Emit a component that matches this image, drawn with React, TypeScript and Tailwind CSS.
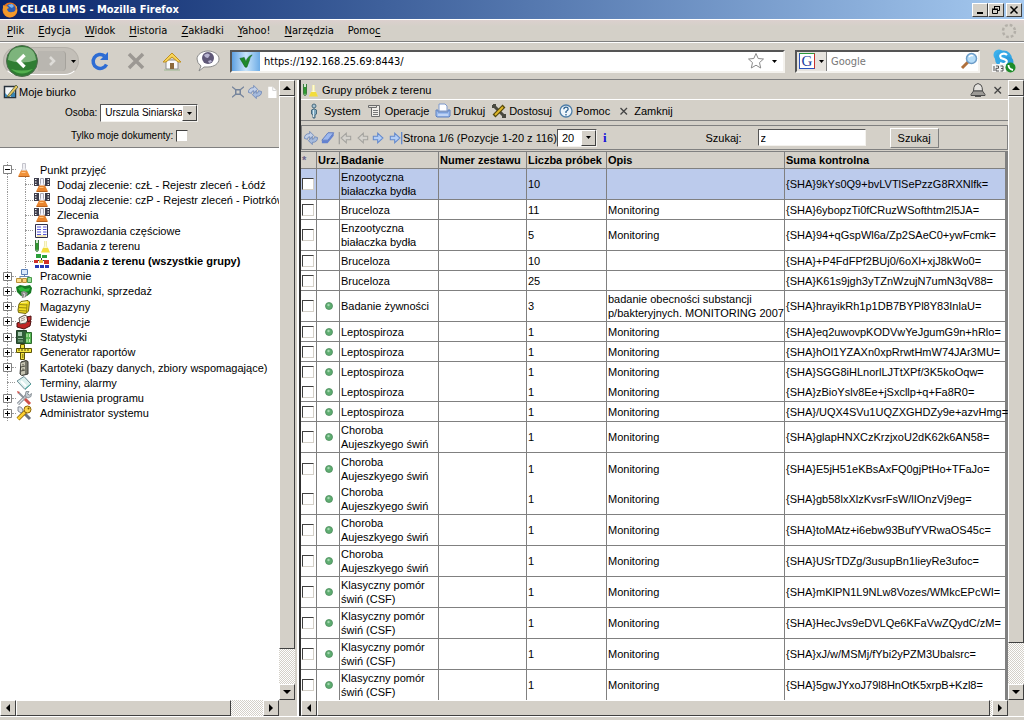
import type { ReactNode } from 'react';
import clsx from 'clsx';

const raised = 'border border-t-white border-l-white border-r-[#404040] border-b-[#404040] bg-[#d4d0c8]';
const sunken = 'border border-t-[#555] border-l-[#555] border-r-[#f4f2ee] border-b-[#f4f2ee] bg-white';

function Svg({ children, size = 'size-4', box = '0 0 16 16' }: { children: ReactNode; size?: string; box?: string }) {
  return (
    <svg viewBox={box} className={clsx('shrink-0', size)} fill="none" aria-hidden="true">
      {children}
    </svg>
  );
}

/* ---------- icons ---------- */

const Flask = () => (
  <Svg>
    <path d="M6.500 1.500h3v5l1.500 3H5l1.500-3z" fill="#f0f0f4" stroke="#c4c4cc" />
    <path d="M5 8.500h6l2.500 5v1h-11v-1z" fill="#f0913a" />
    <path d="M5.500 10.500h4" stroke="#ffc78c" />
    <path d="M2.500 14.500h11" stroke="#b8601c" />
  </Svg>
);

const FlaskDocs = () => (
  <Svg>
    <path d="M0 1h5v8H0zM11 1h5v8h-5z" fill="#3d3d4c" />
    <path d="M1 2.500h1.500M1 5h1.500M1 7.500h1.500M13.500 2.500H15M13.500 5H15M13.500 7.500H15" stroke="#fff" />
    <path d="M6.500 1.500h3v5l1.500 3H5l1.500-3z" fill="#f5f5ff" stroke="#a8a8b4" />
    <path d="M5 8.500h6l2.500 5v1h-11v-1z" fill="#e8842e" />
    <path d="M5.500 10.500h4" stroke="#ffc078" />
    <path d="M2.500 14.500h11" stroke="#b8601c" />
  </Svg>
);

const Sheet = () => (
  <Svg>
    <path d="M1.500 1.500h12v13h-12z" fill="#fbfbff" stroke="#30304a" />
    <path d="M3 4h4M9 4h3.500M3 6.500h4M9 6.500h3.500M3 9h4M9 9h3.500M3 11.500h4M9 11.500h3.500" stroke="#5656d8" />
    <path d="M3 13h9" stroke="#e8d070" />
  </Svg>
);

const Tubes = () => (
  <Svg>
    <path d="M1.500 2v9q0 2.500 1.500 2.500T4.500 11V2" fill="#cfe8cf" stroke="#3c7a3c" />
    <path d="M2 5h2v6q0 1.500-1 1.500T2 11z" fill="#2f9a2f" />
    <path d="M10.500 3v5L8 13.500h7L12.500 8V3" fill="#fffbd0" stroke="#f0eab0" />
    <path d="M9 10h5l2 4.500H7z" fill="#f2dc3c" />
  </Svg>
);

const Groups = () => (
  <Svg>
    <path d="M2 1h5v4H2zM8 2h5v3H8z" fill="#2aa03a" />
    <path d="M7.500 5v3M2.500 10V7.500h11V10" stroke="#404040" />
    <path d="M0 7h4v3H0zM10 7h5v4h-5z" fill="#d03028" />
    <path d="M5 7h4v3H5z" fill="#e8c040" />
    <path d="M1 12h4v3H1zM6 12h4v3H6zM11 12h4v3h-4z" fill="#2538b4" />
  </Svg>
);

const Labs = () => (
  <Svg>
    <path d="M5.500 1.500h6v5h-6z" fill="#dceafc" stroke="#5c80b8" />
    <path d="M4 8.500h9M8.500 7v2M4 8v2M13 8v2" stroke="#6c88b0" />
    <path d="M.5 10.500h5v4h-5z" fill="#ffe08c" stroke="#b89038" />
    <path d="M6.500 10.500h4v4h-4z" fill="#ffd27c" stroke="#b89038" />
    <path d="M11.500 9.500h4v5h-4z" fill="#9cdc9c" stroke="#4a9a4a" />
  </Svg>
);

const Money = () => (
  <Svg>
    <path d="M0 3l4-2 5 1 5-1 2 3-1 5-4 3H5L1 8z" fill="#167a24" />
    <path d="M2 4l4-1 3 2 5-1-1 3-4 1-5-1z" fill="#2fba3c" />
    <path d="M5 8l3-1 4 2-2 4-4 1z" fill="#8c8c8c" />
    <path d="M7 9l2 1-1 3" stroke="#ddd" />
  </Svg>
);

const Barrel = () => (
  <Svg>
    <path d="M5 2.500l7-1 1.500 1.500-1 9-2.500 2.500-7.500-1-.5-2.500 1-6z" fill="#f0dc20" stroke="#70640c" />
    <path d="M3 5.500l8 .5M2.500 8.500L11 9M2.500 11.500l8 .5M11 5l-.500 9" stroke="#9a8a10" />
    <path d="M5 3.500l6-.5" stroke="#fff8a0" />
  </Svg>
);

const Records = () => (
  <Svg>
    <path d="M1 9l9-3 5 1-1 5-6 3-7-2z" fill="#c02424" stroke="#4c1010" />
    <path d="M3 4l6-3 4 3-3 5-6 1z" fill="#f4f0ea" stroke="#59504a" />
    <path d="M5 5l4-1.500M5 7l4-1.500" stroke="#a89890" />
    <path d="M11 3l4-1v4l-3 2z" fill="#c83030" stroke="#4c1010" />
  </Svg>
);

const Stats = () => (
  <Svg>
    <path d="M.5 1.500h10v13H.5z" fill="#315e3a" stroke="#24402a" />
    <path d="M2 3h4v4H2z" fill="#a8c8b0" />
    <path d="M2 9.500h5M2 12h5" stroke="#8cb496" />
    <path d="M9.500 3.500h6v11h-6z" fill="#59b856" stroke="#2c6a2c" />
    <path d="M11 5v3M13.500 5v3M11 10v3M13.500 10v3" stroke="#c6ecb8" />
  </Svg>
);

const Ruler = () => (
  <Svg>
    <path d="M4.500.5h4v15h-4z" fill="#f0e03c" stroke="#5c5408" />
    <path d="M.5 4.500h15v4H.5z" fill="#f6e640" stroke="#5c5408" />
    <path d="M3 5v2M6 5v2M9 5v2M12 5v2" stroke="#4c4408" />
    <path d="M6 11h1.500M6 13h1.500" stroke="#4c4408" />
  </Svg>
);

const Cabinet = () => (
  <Svg>
    <path d="M5 2l5-1.500 2 1V14l-6 1.500L4 14z" fill="#77776c" stroke="#3a3a34" />
    <path d="M5 3l4-1v12l-4 1z" fill="#c8c6b4" />
    <path d="M5 7l4-1M5 11l4-1M7 4v1.500M7 8.500V10" stroke="#4a4a40" />
  </Svg>
);

const Note = () => (
  <Svg>
    <path d="M1 6l7-4.500L15 9l-6 5.500z" fill="#dcf0ee" stroke="#6c8c94" />
    <path d="M5 6l5 5" stroke="#fff" strokeWidth="2" />
    <path d="M9 14l6-5" stroke="#48a8a0" />
  </Svg>
);

const Tools = () => (
  <Svg>
    <path d="M2 14L12 4" stroke="#707880" strokeWidth="3" />
    <path d="M2 14L12 4" stroke="#dfe4e8" strokeWidth="1.500" />
    <path d="M10 1.500l3 0-1.500 2.500 2 1 2-1.500-.5 3-3 1.500-3-2z" fill="#c4ccd2" stroke="#707880" strokeWidth=".7" />
    <path d="M3 3l5 5" stroke="#8c9299" strokeWidth="2" />
    <path d="M9 9l5 5" stroke="#d05048" strokeWidth="3" />
    <path d="M1 1l3 1-2 2z" fill="#d05048" />
  </Svg>
);

const Keys = () => (
  <Svg>
    <path d="M9 9l5 5" stroke="#6c7480" strokeWidth="3" />
    <path d="M2 14l8-8" stroke="#8a6408" strokeWidth="4" />
    <path d="M2 14l8-8" stroke="#fbcf30" strokeWidth="2.500" />
    <path d="M2 2q2-1 4 1l1 3-2 2-3-2z" fill="#dde2e8" stroke="#6c7480" strokeWidth=".8" />
    <circle cx="11.500" cy="4.500" r="3.500" fill="#fcd84c" stroke="#8a6408" />
    <circle cx="12.500" cy="3.500" r="1" fill="#7a5a08" />
  </Svg>
);

const Desk = () => (
  <Svg>
    <path d="M1.500 2.500h11v11h-11z" fill="#f4f8fa" stroke="#28323c" strokeWidth="1.500" />
    <path d="M2 9l4 4H2zM8 6l4 3v4H8z" fill="#3884b4" />
    <path d="M5 11L13 1l2 2-8 9-3 1z" fill="#e8c860" stroke="#4c5a3c" strokeWidth=".8" />
  </Svg>
);

const Collapse = () => (
  <Svg size="size-3">
    <path d="M5 5h6v6H5z" stroke="#75849c" strokeWidth="2" />
    <path d="M0 1l5 4M16 1l-5 4M0 15l5-4M16 15l-5-4" stroke="#75849c" strokeWidth="1.800" />
  </Svg>
);

const Refresh = () => (
  <Svg size="size-3.5">
    <path d="M.5 8.500Q.5 3 6.500 3V.5L11 5 6.500 9V6.500Q4 6.500 4 9.500z" fill="#c2d0e8" stroke="#6f88b8" />
    <path d="M15.500 7.500q0 5.500-6 5.500v2.500L5 11l4.500-4v2.500Q12 9.500 12 6.500z" fill="#a6bbdd" stroke="#6f88b8" />
  </Svg>
);

const Page = () => (
  <Svg size="size-3">
    <path d="M3 1h6l5 5v10H3z" fill="#fff" />
    <path d="M9 1v5h5" stroke="#c8c8c8" />
  </Svg>
);

const Eraser = () => (
  <Svg size="size-3.5">
    <path d="M1 10.500L8 2h6.500L8 10.500z" fill="#9db8ee" stroke="#5674bc" />
    <path d="M1 10.500V14h6.500l7-8.500V2L8 10.500z" fill="#6482d0" />
  </Svg>
);

function Arrow({ flip, bar, on }: { flip?: boolean; bar?: boolean; on?: boolean }) {
  return (
    <Svg size={clsx('size-3.5', flip && '-scale-x-100')}>
      <path d="M1.500 6h5V2.500L12.500 8l-6 5.500V10h-5z" fill={on ? '#b4cef6' : '#d4d2cd'} stroke={on ? '#6389cc' : '#a3a29e'} strokeWidth="1.200" />
      {bar && <path d="M14.500 1v14" stroke={on ? '#6389cc' : '#a3a29e'} strokeWidth="1.500" />}
    </Svg>
  );
}

const Person = () => (
  <Svg>
    <circle cx="8" cy="3" r="2" fill="#a8c4d4" stroke="#48687c" />
    <path d="M5.500 7Q8 4.500 10.500 7v4L9 12v3H7v-3l-1.500-1z" fill="#7fa8bf" stroke="#48687c" />
    <path d="M7.500 7v7" stroke="#d6e6ee" />
  </Svg>
);

const ListDoc = () => (
  <Svg>
    <path d="M4.500 2.500h8v11h-8z" fill="#f0eee9" stroke="#6c6c6c" />
    <path d="M1.500 2.500h8v2h-8z" fill="#e4e2dc" stroke="#6c6c6c" />
    <path d="M6 7.500h5M6 9.500h5M6 11.500h5" stroke="#777" />
  </Svg>
);

const Printer = () => (
  <Svg>
    <path d="M4 1h6l2 2v5H4z" fill="#fff" stroke="#7c98cc" />
    <path d="M1 7h2v2h10V7h2v6l-1 1H2l-1-1z" fill="#9dbcee" stroke="#5c80c0" />
    <path d="M3 12h10" stroke="#e2ecfc" />
  </Svg>
);

const Customize = () => (
  <Svg>
    <path d="M3 3l10 10" stroke="#4a4a40" strokeWidth="3" />
    <path d="M13 3L3 13" stroke="#54480c" strokeWidth="4" />
    <path d="M12 4L4 12" stroke="#e2b828" strokeWidth="1.800" />
    <path d="M2 2h3M2 2v3M11 14h3v-3" stroke="#4a4a40" strokeWidth="2" />
  </Svg>
);

const Help = () => (
  <Svg>
    <circle cx="8" cy="8" r="6" fill="#eef5fb" stroke="#4f7ea8" strokeWidth="1.300" />
    <path d="M5.800 6.300Q6 4.200 8 4.200t2.200 1.800Q10.200 7.200 8 8.500V10M8 11v1.500" stroke="#2d6290" strokeWidth="1.300" />
  </Svg>
);

const Cross = () => (
  <Svg>
    <path d="M4.500 5l6.500 6.500M11 5l-6.500 6.500" stroke="#444" strokeWidth="1.300" />
  </Svg>
);

const Bell = () => (
  <Svg>
    <path d="M5 3q3-3 6 0 1.500 2 1.500 6H3.500Q3.500 5 5 3z" fill="#e4e2de" stroke="#4c4c4c" />
    <path d="M1 12.500L3.500 9h9l2.500 3.500v1H1z" fill="#9c9a96" stroke="#4c4c4c" />
    <path d="M5 14.500h6" stroke="#555" />
  </Svg>
);

const Triangle = ({ dir }: { dir: 'up' | 'down' | 'left' | 'right' }) => {
  const d = { up: 'M0 6l4-4 4 4z', down: 'M0 2h8L4 6z', left: 'M6 0v8L2 4z', right: 'M2 0l4 4-4 4z' }[dir];
  return (
    <svg viewBox="0 0 8 8" className="size-2" aria-hidden="true">
      <path d={d} fill="#000" />
    </svg>
  );
};

const Caret = () => (
  <svg viewBox="0 0 5 3" className="w-[5px] h-[3px]" aria-hidden="true">
    <path d="M0 0h5L2.500 3z" fill="#000" />
  </svg>
);

/* ---------- shared pieces ---------- */

function ScrollButton({ dir }: { dir: 'up' | 'down' | 'left' | 'right' }) {
  return (
    <button aria-label={`Przewiń ${dir}`} className={clsx(raised, 'size-4 shrink-0 flex items-center justify-center')}>
      <Triangle dir={dir} />
    </button>
  );
}

const track = 'bg-[repeating-conic-gradient(#d4d0c8_0_25%,#fff_0_50%)] bg-[length:2px_2px]';

function VScroll({ thumb, rest }: { thumb: string; rest: string }) {
  return (
    <div className="w-4 shrink-0 flex flex-col">
      <ScrollButton dir="up" />
      <div className={clsx(raised, thumb)} />
      <div className={clsx(track, rest)} />
      <ScrollButton dir="down" />
    </div>
  );
}

function HScroll({ thumb, rest }: { thumb: string; rest: string }) {
  return (
    <div className="flex h-4 shrink-0">
      <div className="flex flex-1">
        <ScrollButton dir="left" />
        <div className={clsx(raised, thumb)} />
        <div className={clsx(track, rest)} />
        <ScrollButton dir="right" />
      </div>
      <div className="w-4 bg-[#d4d0c8]" />
    </div>
  );
}

function Dropdown({ id, label, value, className }: { id: string; label?: string; value: string; className: string }) {
  return (
    <div className={clsx(sunken, 'relative h-[18px]', className)}>
      <select id={id} aria-label={label} className="block size-full appearance-none bg-white pl-1 leading-4 outline-none">
        <option>{value}</option>
      </select>
      <span className={clsx(raised, 'absolute right-0 inset-y-0 w-[15px] flex items-center justify-center pointer-events-none')}>
        <Caret />
      </span>
    </div>
  );
}

const Check = ({ id, label }: { id?: string; label?: string }) => (
  <input
    id={id}
    aria-label={label}
    type="checkbox"
    className="block size-3 appearance-none shrink-0 bg-white border border-t-[#404040] border-l-[#404040] border-r-[#d4d0c8] border-b-[#d4d0c8]"
  />
);

/* ---------- browser chrome ---------- */

function TitleBar() {
  return (
    <div className="h-[19px] shrink-0 flex items-center gap-[2px] px-[2px] bg-linear-to-r from-[#0a246a] to-[#a6caf0]">
      <Svg>
        <circle cx="8" cy="8" r="7.500" fill="#e8741c" />
        <circle cx="8.500" cy="7" r="5" fill="#2c5cb4" />
        <path d="M6 3l4-1 2 2-2 2-2-1z" fill="#7cb4ec" />
        <path d="M1 3q3 2 4 1l2 2-2 1q1 4 5 3 4 0 4-4 2 4-1 7t-7 2Q0 13 1 3z" fill="#f29a2c" />
        <path d="M13 3q3 4 1 8l1-6z" fill="#fcd850" />
      </Svg>
      <h1 className="flex-1 text-white leading-4 font-bold">CELAB LIMS - Mozilla Firefox</h1>
      <div className="flex h-[14px]">
        <button aria-label="Minimalizuj" className={clsx(raised, 'w-4 flex items-end justify-center pb-[2px]')}>
          <span className="w-1.5 h-[2px] bg-black" />
        </button>
        <button aria-label="Przywróć" className={clsx(raised, 'w-4 flex items-center justify-center')}>
          <Svg size="size-[10px]" box="0 0 10 10">
            <path d="M3.500 4V1.500h5v4H7M3 1.500h6" stroke="#000" />
            <path d="M1.500 4.500h5v4h-5zM1 4h6" stroke="#000" />
          </Svg>
        </button>
        <button aria-label="Zamknij okno" className={clsx(raised, 'ml-[2px] w-4 flex items-center justify-center')}>
          <Svg size="size-[10px]" box="0 0 10 10">
            <path d="M1.500 1.500l7 7M8.500 1.500l-7 7" stroke="#000" strokeWidth="1.500" />
          </Svg>
        </button>
      </div>
    </div>
  );
}

// [before, mnemonic, after]
const menus = [
  ['', 'P', 'lik'],
  ['', 'E', 'dycja'],
  ['', 'W', 'idok'],
  ['', 'H', 'istoria'],
  ['', 'Z', 'akładki'],
  ['', 'Y', 'ahoo!'],
  ['', 'N', 'arzędzia'],
  ['Pomo', 'c', ''],
];

function MenuBar() {
  return (
    <nav className="h-[23px] shrink-0 flex items-center justify-between px-[7px] border-t border-t-white border-b border-b-[#808080] bg-linear-to-b from-[#dcd0ce] to-[#d4d0c8] to-30%">
      <div className="flex gap-3.5">
        {menus.map(([a, b, c]) => (
          <button key={a + b + c} className="leading-4">
            {a}<u className="underline-offset-2">{b}</u>{c}
          </button>
        ))}
      </div>
      <svg viewBox="0 0 16 16" className="size-4" aria-hidden="true">
        <circle cx="8" cy="8" r="6" fill="none" stroke="#b3afa8" strokeWidth="2.500" strokeDasharray="2.700 2.010" />
      </svg>
    </nav>
  );
}

function NavBar() {
  return (
    <div className="h-[38px] shrink-0 flex items-center pl-[3px] pr-2 border-t border-t-white border-b border-b-[#808080]">
      <div className="flex items-center h-7 w-[76px] rounded-[14px] bg-[#c3bfb8] border border-[#b5b1aa] border-b-white">
        <button aria-label="Wstecz" className="size-8 ml-[2px] rounded-full shrink-0">
          <Svg size="size-8" box="0 0 32 32">
            <circle cx="16" cy="16" r="15.500" fill="#2f7d33" stroke="#4e6b4e" />
            <path d="M2 15Q3 2 16 2t14 13q-14 5-28 0z" fill="#7db47c" />
            <path d="M5 24q11 9 22 0-11 3-22 0z" fill="#53b04e" />
            <path d="M18.500 10l-6 6 6 6" stroke="#fff" strokeWidth="3.500" />
          </Svg>
        </button>
        <button aria-label="Dalej" className="h-5 w-7 flex items-center justify-center rounded-r-sm bg-[#b9b6b0] border-r border-[#a5a29c]">
          <Svg>
            <path d="M6 4l4 4-4 4" stroke="#dedcd8" strokeWidth="2.500" />
          </Svg>
        </button>
        <span className="pl-[5px]"><Caret /></span>
      </div>
      <div className="flex items-center gap-3 pl-[9px]">
        <button aria-label="Odśwież" className="size-6">
          <Svg size="size-6" box="0 0 24 24">
            <path d="M18.500 15.500A7 7 0 1 1 16.500 7" stroke="#2d6cd4" strokeWidth="3.500" />
            <path d="M20 3v8h-8z" fill="#2d6cd4" />
          </Svg>
        </button>
        <button aria-label="Zatrzymaj" className="size-6">
          <Svg size="size-6" box="0 0 24 24">
            <path d="M5 5l14 14M19 5L5 19" stroke="#9c9893" strokeWidth="3.500" />
          </Svg>
        </button>
        <button aria-label="Strona startowa" className="size-6">
          <Svg size="size-6" box="0 0 24 24">
            <path d="M6 11h12v9H6z" fill="#fafafa" stroke="#8c8c8c" />
            <path d="M12 4l-9 9h3l6-5 6 5h3z" fill="#f8d458" stroke="#c09020" />
            <path d="M10 14h4v6h-4z" fill="#8c6a3c" />
            <path d="M4 21h16" stroke="#9cb890" />
          </Svg>
        </button>
        <button aria-label="Tłumacz" className="size-6">
          <Svg size="size-6" box="0 0 24 24">
            <path d="M12 2c6 0 11 3.500 11 8s-5 8-11 8H8l-5 4 2-5Q1 14 1 10c0-4.500 5-8 11-8z" fill="#fff" stroke="#8a8a8a" />
            <circle cx="12" cy="9" r="6" fill="#5f5878" />
            <path d="M8 6q4-3 6 0l-2 3q-3 0-4-3zM12 12l3-1 1 2-3 1z" fill="#b7b3d0" />
          </Svg>
        </button>
      </div>

      <div className={clsx(sunken, 'ml-[10px] flex-1 h-[23px] flex items-center border-2')}>
        <span className="h-full w-7 flex items-center justify-center bg-linear-to-r from-[#5ea0e0] via-[#c8e4fa] to-[#6cace6]">
          <Svg size="size-3.5">
            <path d="M1 5l5-1 2 5q1-6 7-8-3 3-3 6l-3 8H7z" fill="#1e8a2a" stroke="#0f5a18" strokeWidth=".6" />
          </Svg>
        </span>
        <input aria-label="Adres" defaultValue="https://192.168.25.69:8443/" className="flex-1 min-w-0 pl-1 pt-px leading-4 outline-none" />
        <Svg size="size-[18px]" box="0 0 18 18">
          <path d="M9 1.500l2.200 5 5.300.5-4 3.600 1.200 5.400L9 13.200 4.300 16l1.200-5.400-4-3.600 5.300-.5z" fill="#fff" stroke="#8a8a8a" />
        </Svg>
        <span className="w-[18px] flex justify-center"><Caret /></span>
      </div>

      <div className={clsx(sunken, 'ml-[10px] w-[185px] h-[23px] flex items-center border-2')}>
        <button aria-label="Wyszukiwarka" className="h-full w-[30px] flex items-center gap-1 pl-[2px] bg-[#e6e3de] border-r border-[#808080]">
          <span className="size-4 bg-white border border-t-[#2c9a3c] border-l-[#2a52be] border-r-[#c8302c] border-b-[#2a52be] flex items-center justify-center text-[#1c3c9c] text-[15px] leading-none font-['Liberation_Serif',serif]">G</span>
          <Caret />
        </button>
        <input aria-label="Google" placeholder="Google" className="flex-1 min-w-0 pl-1 pt-px leading-4 placeholder:text-[#777] outline-none" />
        <Svg size="size-[18px]" box="0 0 18 18">
          <path d="M2 16l6-6" stroke="#b0703c" strokeWidth="3" />
          <circle cx="11.500" cy="6.500" r="5" fill="#b4dcf8" stroke="#6c9cc8" strokeWidth="1.500" />
          <path d="M9 5q2-2.500 4-1" stroke="#fff" strokeWidth="1.500" />
        </Svg>
      </div>

      <button aria-label="Skype" className="ml-3 size-6">
        <Svg size="size-6" box="0 0 24 24">
          <circle cx="7" cy="6" r="5.500" fill="#3cb0ec" />
          <circle cx="11.500" cy="10" r="8.500" fill="#35a8e6" />
          <circle cx="16" cy="13" r="5.500" fill="#2c9cdc" />
          <path d="M15 6q-2-2-5-1t-1 4l4 1.500q3 1.500 1 3.500t-6 0" stroke="#fff" strokeWidth="2.200" />
          <path d="M0 15h14v8H0z" fill="#f4f4f4" />
          <path d="M2 17v5M4 17h2.500v2.300H4V22h3M8.500 17H11v5H8.500M9 19.500h2" stroke="#444" strokeWidth=".9" />
          <circle cx="18.500" cy="18.500" r="5" fill="#1c8c28" />
          <path d="M16.500 16q0 4 4.500 5" stroke="#fff" strokeWidth="1.800" />
        </Svg>
      </button>
    </div>
  );
}

/* ---------- left frame ---------- */

type Node = { label: string; icon: () => ReactNode; child?: boolean; open?: boolean; leaf?: boolean; bold?: boolean };

const tree: Node[] = [
  { label: 'Punkt przyjęć', icon: Flask, open: true },
  { label: 'Dodaj zlecenie: czŁ - Rejestr zleceń - Łódź', icon: FlaskDocs, child: true },
  { label: 'Dodaj zlecenie: czP - Rejestr zleceń - Piotrków', icon: FlaskDocs, child: true },
  { label: 'Zlecenia', icon: FlaskDocs, child: true },
  { label: 'Sprawozdania częściowe', icon: Sheet, child: true },
  { label: 'Badania z terenu', icon: Tubes, child: true },
  { label: 'Badania z terenu (wszystkie grupy)', icon: Groups, child: true, bold: true },
  { label: 'Pracownie', icon: Labs },
  { label: 'Rozrachunki, sprzedaż', icon: Money },
  { label: 'Magazyny', icon: Barrel },
  { label: 'Ewidencje', icon: Records },
  { label: 'Statystyki', icon: Stats },
  { label: 'Generator raportów', icon: Ruler },
  { label: 'Kartoteki (bazy danych, zbiory wspomagające)', icon: Cabinet },
  { label: 'Terminy, alarmy', icon: Note, leaf: true },
  { label: 'Ustawienia programu', icon: Tools },
  { label: 'Administrator systemu', icon: Keys },
];

const guide = 'bg-[linear-gradient(#999_50%,transparent_50%)] bg-[length:1px_2px] bg-repeat-y';

function TreeRow({ node }: { node: Node }) {
  const Icon = node.icon;
  return (
    <li className="flex items-center whitespace-nowrap">
      <span className={clsx(guide, 'w-4 h-full flex items-center pl-[3px] bg-[position:7px_0]')}>
        {!node.child && !node.leaf && (
          <svg viewBox="0 0 9 9" className="size-[9px]" aria-hidden="true">
            <path d="M.5.5h8v8h-8z" fill="#fff" stroke="#808080" />
            <path d={node.open ? 'M2 4.500h5' : 'M2 4.500h5M4.500 2v5'} stroke="#000" />
          </svg>
        )}
        {!node.child && <i className={clsx('border-t border-dotted border-[#999]', node.leaf ? 'ml-1 w-2' : 'w-1')} />}
      </span>
      {node.child && (
        <span className={clsx(guide, 'w-[18px] h-full flex items-center pl-[9px] bg-[position:9px_0]')}>
          <i className="w-2 border-t border-dotted border-[#999]" />
        </span>
      )}
      <Icon />
      <a href="#" className={clsx(node.child ? 'pl-[7px]' : 'pl-2', node.bold && 'font-bold')}>{node.label}</a>
    </li>
  );
}

function Sidebar() {
  return (
    <aside className="w-[299px] shrink-0 flex flex-col pr-[2px] border-r-2 border-r-white">
      <div className="flex flex-1 min-h-0">
        <div className="flex-1 min-w-0 overflow-hidden bg-white">
          <div className="h-[68px] bg-[#d4d0c8] border-b border-[#808080]">
            <div className="flex items-center pl-[3px] pt-[2px] h-[22px]">
              <Desk />
              <h2 className="flex-1">Moje biurko</h2>
              <div className="flex items-center gap-1 pr-px">
                <Collapse />
                <Refresh />
                <Page />
              </div>
            </div>
            <div className="flex items-center gap-[3px] pl-[65px] pt-[2px] text-[10px]">
              <label htmlFor="osoba">Osoba:</label>
              <Dropdown id="osoba" value="Urszula Siniarska" className="w-[98px]" />
            </div>
            <div className="flex items-center gap-[3px] pl-[71px] pt-[7px] text-[10px]">
              <label htmlFor="moje">Tylko moje dokumenty:</label>
              <Check id="moje" />
            </div>
          </div>
          <ul className="mt-[14px] h-[259px] grid auto-rows-fr">
            {tree.map((n) => <TreeRow key={n.label} node={n} />)}
          </ul>
        </div>
        <VScroll thumb="flex-[94]" rest="flex-[6]" />
      </div>
      <HScroll thumb="flex-[87]" rest="flex-[13]" />
    </aside>
  );
}

/* ---------- right frame ---------- */

const tools = [
  { label: 'System', icon: Person },
  { label: 'Operacje', icon: ListDoc },
  { label: 'Drukuj', icon: Printer },
  { label: 'Dostosuj', icon: Customize },
  { label: 'Pomoc', icon: Help },
  { label: 'Zamknij', icon: Cross },
];

type Row = { dot?: boolean; name: string; count: number; desc?: string; sum: string; tall?: boolean; merged?: boolean };

const rows: Row[] = [
  { name: 'Enzootyczna białaczka bydła', count: 10, sum: '9kYs0Q9+bvLVTlSePzzG8RXNlfk=', tall: true },
  { name: 'Bruceloza', count: 11, desc: 'Monitoring', sum: '6ybopzTi0fCRuzWSofthtm2l5JA=' },
  { name: 'Enzootyczna białaczka bydła', count: 5, desc: 'Monitoring', sum: '94+qGspWl6a/Zp2SAeC0+ywFcmk=', tall: true },
  { name: 'Bruceloza', count: 10, sum: '+P4FdFPf2BUj0/6oXl+xjJ8kWo0=' },
  { name: 'Bruceloza', count: 25, sum: 'K61s9jgh3yTZnWzujN7umN3qV88=' },
  { dot: true, name: 'Badanie żywności', count: 3, desc: 'badanie obecności substancji p/bakteryjnych. MONITORING 2007', sum: 'hrayikRh1p1DB7BYPl8Y83InlaU=', tall: true },
  { dot: true, name: 'Leptospiroza', count: 1, desc: 'Monitoring', sum: 'eq2uwovpKODVwYeJgumG9n+hRlo=' },
  { dot: true, name: 'Leptospiroza', count: 1, desc: 'Monitoring', sum: 'hOl1YZAXn0xpRrwtHmW74JAr3MU=' },
  { dot: true, name: 'Leptospiroza', count: 1, desc: 'Monitoring', sum: 'SGG8iHLnorlLJTtXPf/3K5koOqw=', merged: true },
  { dot: true, name: 'Leptospiroza', count: 1, desc: 'Monitoring', sum: 'zBioYslv8Ee+jSxcllp+q+Fa8R0=' },
  { dot: true, name: 'Leptospiroza', count: 1, desc: 'Monitoring', sum: '/UQX4SVu1UQZXGHDZy9e+azvHmg=' },
  { dot: true, name: 'Choroba Aujeszkyego świń', count: 1, desc: 'Monitoring', sum: 'glapHNXCzKrzjxoU2dK62k6AN58=', tall: true },
  { dot: true, name: 'Choroba Aujeszkyego świń', count: 1, desc: 'Monitoring', sum: 'E5jH51eKBsAxFQ0gjPtHo+TFaJo=', tall: true, merged: true },
  { dot: true, name: 'Choroba Aujeszkyego świń', count: 1, desc: 'Monitoring', sum: 'gb58lxXlzKvsrFsW/lIOnzVj9eg=', tall: true },
  { dot: true, name: 'Choroba Aujeszkyego świń', count: 1, desc: 'Monitoring', sum: 'toMAtz+i6ebw93BufYVRwaOS45c=', tall: true },
  { dot: true, name: 'Choroba Aujeszkyego świń', count: 1, desc: 'Monitoring', sum: 'USrTDZg/3usupBn1lieyRe3ufoc=', tall: true },
  { dot: true, name: 'Klasyczny pomór świń (CSF)', count: 1, desc: 'Monitoring', sum: 'mKlPN1L9NLw8Vozes/WMkcEPcWI=', tall: true },
  { dot: true, name: 'Klasyczny pomór świń (CSF)', count: 1, desc: 'Monitoring', sum: 'HecJvs9eDVLQe6KFaVwZQydC/zM=', tall: true },
  { dot: true, name: 'Klasyczny pomór świń (CSF)', count: 1, desc: 'Monitoring', sum: 'xJ/w/MSMj/fYbi2yPZM3Ubalsrc=', tall: true },
  { dot: true, name: 'Klasyczny pomór świń (CSF)', count: 1, desc: 'Monitoring', sum: '5gwJYxoJ79l8HnOtK5xrpB+Kzl8=', tall: true },
];

function SamplesTable() {
  const th = 'border-r border-b border-t border-[#808080] pl-px text-left leading-4 font-bold whitespace-nowrap';
  return (
    <table className="w-full table-fixed border-separate border-spacing-0 border-r-2 border-[#808080] bg-white">
      <colgroup>
        <col className="w-4" />
        <col className="w-[23px]" />
        <col className="w-[99px]" />
        <col className="w-[88px]" />
        <col className="w-20" />
        <col className="w-[178px]" />
        <col />
      </colgroup>
      <thead>
        <tr className="h-[18px] bg-[#d4d0c8]">
          <th className={clsx(th, 'text-center text-[#6c6488]')}>*</th>
          <th className={th}>Urz.</th>
          <th className={th}>Badanie</th>
          <th className={th}>Numer zestawu</th>
          <th className={th}>Liczba próbek</th>
          <th className={th}>Opis</th>
          <th className={th}>Suma kontrolna</th>
        </tr>
      </thead>
      <tbody>
        {rows.map((r, i) => {
          const td = clsx('border-r border-[#808080] pl-px leading-[14px]', !r.merged && 'border-b');
          return (
            <tr key={r.sum} className={clsx(r.tall ? 'h-[31px]' : 'h-5', i === 0 && 'bg-[#bccbec]')}>
              <td className={td}><Check label={`Zaznacz ${r.name}`} /></td>
              <td className={td}>
                {r.dot && (
                  <svg viewBox="0 0 8 8" className="size-2 mx-auto" aria-hidden="true">
                    <circle cx="4" cy="4" r="3.500" fill="#5fae72" stroke="#4c8c5c" strokeWidth=".8" />
                    <circle cx="3.500" cy="3" r="1.200" fill="#a4d8b0" />
                  </svg>
                )}
              </td>
              <td className={td}>{r.name}</td>
              <td className={td} />
              <td className={td}>{r.count}</td>
              <td className={td}>{r.desc}</td>
              <td className={clsx(td, 'whitespace-nowrap')}>{'{SHA}' + r.sum}</td>
            </tr>
          );
        })}
      </tbody>
    </table>
  );
}

function Main() {
  return (
    <main className="flex-1 min-w-0 flex flex-col border-l-2 border-l-[#303030]">
      <div className="flex flex-1 min-h-0">
        <div className="flex-1 min-w-0 overflow-hidden">
          <header className="h-5 flex items-center gap-1 pl-px pr-[2px] border-b border-b-white">
            <Tubes />
            <h2 className="flex-1">Grupy próbek z terenu</h2>
            <Bell />
            <button aria-label="Zamknij kartę"><Cross /></button>
          </header>
          <div className="h-[21px] flex items-center gap-1.5 pl-[5px] pt-px border-b border-[#808080]">
            {tools.map(({ label, icon: Icon }) => (
              <button key={label} className="flex items-center gap-[2px]">
                <Icon />{label}
              </button>
            ))}
          </div>
          <form className="mt-1 h-[25px] flex items-center pl-[2px] border border-[#808080]">
            <div className="flex items-center gap-[3px]">
              <button type="button" aria-label="Odśwież listę"><Refresh /></button>
              <button type="button" aria-label="Wyczyść"><Eraser /></button>
              <button type="button" aria-label="Pierwsza"><Arrow flip bar /></button>
              <button type="button" aria-label="Poprzednia"><Arrow flip /></button>
              <button type="button" aria-label="Następna"><Arrow on /></button>
              <button type="button" aria-label="Ostatnia"><Arrow on bar /></button>
            </div>
            <span className="whitespace-nowrap">Strona 1/6 (Pozycje 1-20 z 116)</span>
            <Dropdown id="ile" label="Pozycji na stronie" value="20" className="w-10" />
            <b className="pl-1.5 text-[#1414d8] text-[13px] leading-4 font-['Liberation_Serif',serif]">i</b>
            <label htmlFor="szukaj" className="ml-[99px]">Szukaj:</label>
            <input id="szukaj" defaultValue="z" className={clsx(sunken, 'ml-4 w-[108px] h-[17px] px-[2px] outline-none')} />
            <button type="button" className={clsx(raised, 'ml-6 w-[49px] h-5 pt-px border-r-[#808080] border-b-[#808080]')}>Szukaj</button>
          </form>
          <div className="mt-px">
            <SamplesTable />
          </div>
        </div>
        <VScroll thumb="flex-[93]" rest="flex-[7]" />
      </div>
      <HScroll thumb="flex-1" rest="w-[2px]" />
    </main>
  );
}

export default function App() {
  return (
    <div className="h-screen flex flex-col overflow-hidden bg-[#d4d0c8] text-black text-[11px] leading-[14px] font-['Liberation_Sans',Arial,sans-serif]">
      <div className="shrink-0 font-['DejaVu_Sans_Condensed','DejaVu_Sans',sans-serif]">
        <TitleBar />
        <MenuBar />
        <NavBar />
      </div>
      <div className="flex flex-1 min-h-0">
        <Sidebar />
        <Main />
      </div>
      <footer className="h-1 shrink-0 border-t border-white" />
    </div>
  );
}
